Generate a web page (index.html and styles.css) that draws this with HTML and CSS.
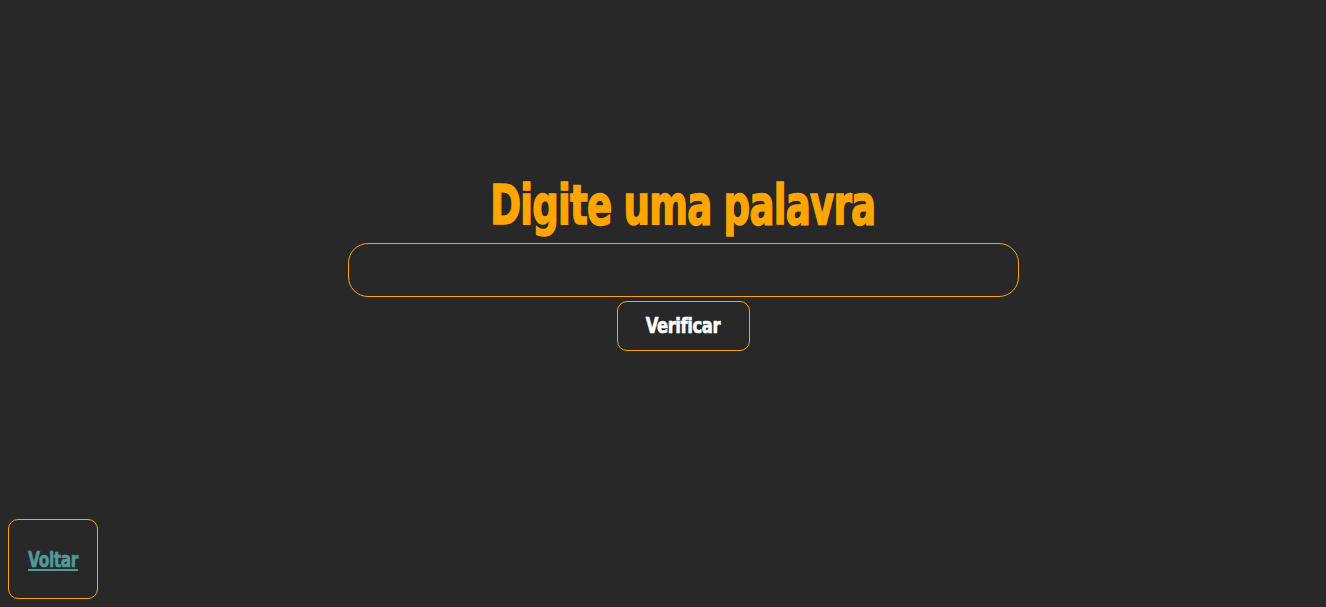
FILE: index.html
```html
<!DOCTYPE html>
<html lang="pt-BR">
<head>
<meta charset="utf-8">
<title>Palíndromo</title>
<link rel="stylesheet" href="styles.css">
</head>
<body>
<main class="main">
  <h1 class="title">Digite uma palavra</h1>
  <input class="word-input" type="text">
  <button class="check-btn" type="button"><span class="btn-label">Verificar</span></button>
</main>
<footer class="footer">
  <a class="back-link" href="#"><span class="link-label">Voltar</span></a>
</footer>
</body>
</html>
```

FILE: styles.css
```css
html, body {
  height: 100%;
}
body {
  margin: 0;
  padding: 8px;
  box-sizing: border-box;
  background: #282828;
  display: flex;
  flex-direction: column;
  font-family: Impact, "DejaVu Sans Condensed", "DejaVu Sans", sans-serif;
  font-stretch: condensed;
}
.main {
  flex: 1;
  padding-left: 40px;
  display: flex;
  flex-direction: column;
  align-items: center;
  justify-content: center;
}
.title {
  margin: 0 0 10px;
  color: #ffa500;
  font-size: 55px;
  font-weight: bold;
  line-height: 56px;
  letter-spacing: -1px;
  white-space: nowrap;
  -webkit-text-stroke: 1.5px #ffa500;
  transform: scaleX(0.75);
}
.word-input {
  box-sizing: border-box;
  width: 671px;
  height: 54px;
  background: transparent;
  border: 1px solid #ffa500;
  border-radius: 20px;
  outline: none;
  color: #fff;
  font-size: 20px;
}
.check-btn {
  box-sizing: border-box;
  margin-top: 4px;
  width: 133px;
  height: 50px;
  padding: 0;
  background: transparent;
  border: 1px solid #ffa500;
  border-radius: 10px;
  color: #fff;
  font-family: inherit;
  font-stretch: condensed;
  font-weight: bold;
  font-size: 22px;
  letter-spacing: -0.5px;
}
.btn-label {
  display: inline-block;
  -webkit-text-stroke: 0.6px #fff;
  transform: scaleX(0.83);
}
.footer {
  display: flex;
}
.back-link {
  box-sizing: border-box;
  width: 90px;
  height: 80px;
  display: flex;
  align-items: center;
  justify-content: center;
  border: 1px solid #ffa500;
  border-radius: 10px;
  color: #4f9a9b;
  font-weight: bold;
  font-size: 22px;
  letter-spacing: -0.5px;
  text-decoration: underline;
}
.link-label {
  display: inline-block;
  text-decoration: underline;
  -webkit-text-stroke: 0.6px #4f9a9b;
  transform: scaleX(0.78);
}
```
